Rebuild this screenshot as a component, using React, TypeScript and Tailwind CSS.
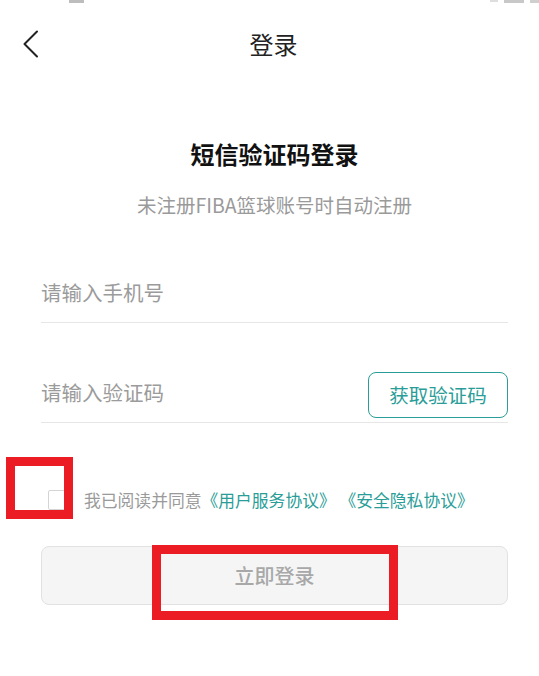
import React from "react";

export default function App() {
  const font = { fontFamily: '"Noto Sans CJK SC", "Noto Sans", sans-serif' };
  return (
    <div
      className="relative w-[539px] h-[676px] overflow-hidden bg-white text-[#222]"
      style={font}
    >
      {/* status bar remnants */}
      <div className="h-[20px] flex items-start">
        <div className="ml-[69px] w-[15px] h-[3px] bg-[#bdbdbd]" />
        <div className="ml-auto flex gap-[6px]">
          <div className="w-[8px] h-[2px] bg-[#dedede]" />
          <div className="w-[20px] h-[3px] bg-[#c8c8c8]" />
          <div className="w-[9px] h-[3px] bg-[#cfcfcf]" />
        </div>
      </div>

      {/* header */}
      <div className="h-[48px] grid grid-cols-[1fr_auto_1fr] items-center pl-[8px]">
        <div className="pl-[14px] flex items-center">
          <svg width="18" height="28" viewBox="0 0 18 28" fill="none">
            <polyline
              points="15,1.5 2.5,14 15,26.5"
              stroke="#222"
              strokeWidth="2"
              strokeLinecap="round"
              strokeLinejoin="round"
            />
          </svg>
        </div>
        <div className="text-[24px] leading-none text-[#222]">登录</div>
        <div />
      </div>

      <div className="pl-[41px] pr-[31px]">
        <div className="mt-[70px] text-center text-[24px] leading-[32px] font-bold text-[#111]">
          短信验证码登录
        </div>
        <div className="mt-[21px] text-center text-[19.5px] leading-[28px] text-[#9a9a9a]">
          未注册FIBA篮球账号时自动注册
        </div>

        <div className="mt-[44px] h-[60px] flex items-center border-b border-[#e6e6e6]">
          <span className="text-[20.5px] text-[#9b9b9b]">请输入手机号</span>
        </div>

        <div className="mt-[40px] h-[60px] flex items-center border-b border-[#e6e6e6]">
          <span className="text-[20.5px] text-[#9b9b9b]">请输入验证码</span>
          <div className="ml-auto self-end mb-[4px] w-[140px] h-[46px] rounded-[8px] border-[1.5px] border-[#2a9d98] flex items-center justify-center text-[19.5px] text-[#2a9d98]">
            获取验证码
          </div>
        </div>

        <div className="mt-[65px] h-[24px] flex items-center pl-[7px]">
          <div className="w-[20px] h-[20px] rounded-[2px] border border-[#d4d4d4] bg-white shrink-0" />
          <div className="ml-[16px] text-[16.8px] leading-[24px] whitespace-pre">
            <span className="text-[#9a9a9a]">我已阅读并同意</span>
            <span className="text-[#2a9d98]">《用户服务协议》 《安全隐私协议》</span>
          </div>
        </div>

        <div className="mt-[34px] h-[59px] rounded-[8px] border border-[#e2e2e2] bg-[#f5f5f5] flex items-center justify-center">
          <span className="text-[20px] font-medium text-[#a8a8a8]">立即登录</span>
        </div>
      </div>

      {/* annotation overlays */}
      <div className="absolute left-[6px] top-[457px] w-[67px] h-[62px] border-[9px] border-[#ec1c24]" />
      <div className="absolute left-[152px] top-[545px] w-[246px] h-[75px] border-[9px] border-[#ec1c24]" />
    </div>
  );
}
